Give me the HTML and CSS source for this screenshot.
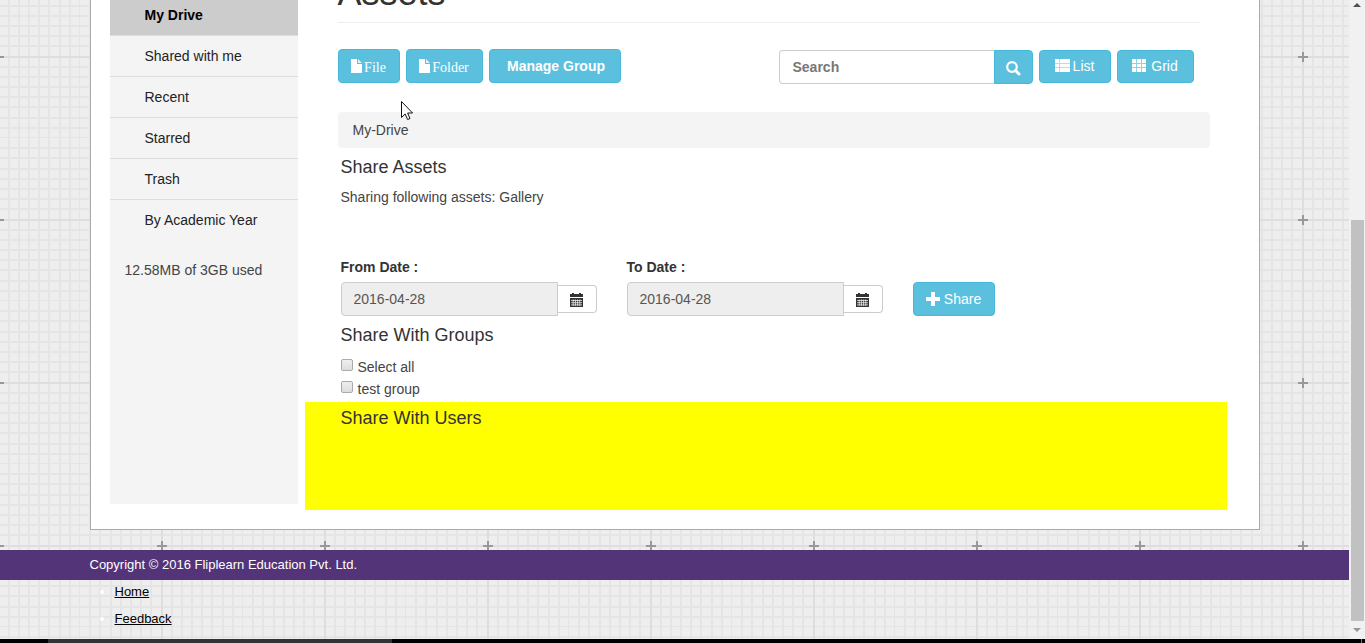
FILE: index.html
```html
<!DOCTYPE html>
<html lang="en">
<head>
<meta charset="utf-8">
<title>Assets</title>
<link rel="stylesheet" href="styles.css">
</head>
<body>
<div class="window">
  <div class="page">
    <div class="shell panel">
      <nav class="sidebar">
        <ul class="menu">
          <li><a class="menu-link active" href="#">My Drive</a></li>
          <li><a class="menu-link" href="#">Shared with me</a></li>
          <li><a class="menu-link" href="#">Recent</a></li>
          <li><a class="menu-link" href="#">Starred</a></li>
          <li><a class="menu-link" href="#">Trash</a></li>
          <li><a class="menu-link" href="#">By Academic Year</a></li>
        </ul>
        <p class="storage">12.58MB of 3GB used</p>
      </nav>
      <main class="main">
        <h1 class="title">Assets</h1>
        <div class="toolbar">
          <div class="tools">
            <button class="btn btn-serif btn-file" type="button"><svg class="doc" viewBox="0 0 11 14" aria-hidden="true"><path fill="#fff" d="M0 0h6v5h5v9H0z"/><path fill="#fff" opacity=".8" d="M7 0l4 4H7z"/></svg>File</button>
            <button class="btn btn-serif btn-folder" type="button"><svg class="doc" viewBox="0 0 11 14" aria-hidden="true"><path fill="#fff" d="M0 0h6v5h5v9H0z"/><path fill="#fff" opacity=".8" d="M7 0l4 4H7z"/></svg>Folder</button>
            <button class="btn btn-manage" type="button">Manage Group</button>
          </div>
          <div class="tools tools-right">
            <form class="search">
              <input class="search-input" type="text" placeholder="Search" aria-label="Search">
              <button class="btn search-btn" type="button" aria-label="Search"><svg width="15" height="15" viewBox="0 0 15 15" aria-hidden="true"><circle cx="6" cy="6" r="4.8" fill="none" stroke="#fff" stroke-width="2.2"/><path d="M9.5 9.5l3.500 3.500" stroke="#fff" stroke-width="3" stroke-linecap="round"/></svg></button>
            </form>
            <button class="btn btn-view btn-list" type="button"><svg width="15" height="13" viewBox="0 0 15 13" fill="#fff" aria-hidden="true"><path opacity=".5" d="M0 0h15v13H0z"/><path d="M0 0h4v4H0zM5 0h10v4H5zM0 5h4v3H0zM5 5h10v3H5zM0 9h4v4H0zM5 9h10v4H5z"/></svg>List</button>
            <button class="btn btn-view btn-grid" type="button"><svg width="14" height="13" viewBox="0 0 14 13" fill="#fff" aria-hidden="true"><path opacity=".3" d="M0 0h14v13H0z"/><path d="M0 0h4v4H0zM5 0h4v4H5zM10 0h4v4h-4zM0 5h4v3H0zM5 5h4v3H5zM10 5h4v3h-4zM0 9h4v4H0zM5 9h4v4H5zM10 9h4v4h-4z"/></svg>Grid</button>
          </div>
        </div>
        <div class="crumbs">My-Drive</div>
        <section class="section">
          <h4 class="heading">Share Assets</h4>
          <p class="sharing">Sharing following assets: Gallery</p>
          <div class="dates">
            <div class="date">
              <label class="date-label" for="from">From Date :</label>
              <div class="date-group">
                <input class="date-input" id="from" type="text" value="2016-04-28" readonly>
                <button class="date-btn" type="button" aria-label="Choose from date"><svg width="13" height="14" viewBox="0 0 13 14" aria-hidden="true"><path fill="#333" d="M0 1h2V0h2v1h5V0h2v1h2v3H0zM0 5h13v9H0z"/><path stroke="#fff" stroke-width=".7" d="M1 7.500h11M1 9.700h11M1 11.900h11M3.200 6.500V13M5.400 6.500V13M7.600 6.500V13M9.800 6.500V13"/></svg></button>
              </div>
            </div>
            <div class="date">
              <label class="date-label" for="to">To Date :</label>
              <div class="date-group">
                <input class="date-input" id="to" type="text" value="2016-04-28" readonly>
                <button class="date-btn" type="button" aria-label="Choose to date"><svg width="13" height="14" viewBox="0 0 13 14" aria-hidden="true"><path fill="#333" d="M0 1h2V0h2v1h5V0h2v1h2v3H0zM0 5h13v9H0z"/><path stroke="#fff" stroke-width=".7" d="M1 7.500h11M1 9.700h11M1 11.900h11M3.200 6.500V13M5.400 6.500V13M7.600 6.500V13M9.800 6.500V13"/></svg></button>
              </div>
            </div>
            <button class="btn btn-share" type="button"><svg width="14" height="14" viewBox="0 0 14 14" aria-hidden="true"><path fill="#fff" d="M5 0h4v5h5v4H9v5H5V9H0V5h5z"/></svg>Share</button>
          </div>
          <h4 class="heading">Share With Groups</h4>
          <div class="checks">
            <label class="check"><input class="box" type="checkbox">Select all</label>
            <label class="check"><input class="box" type="checkbox">test group</label>
          </div>
        </section>
        <section class="users">
          <h4 class="heading users-heading">Share With Users</h4>
        </section>
      </main>
    </div>
    <footer>
      <div class="copyright"><div class="shell">Copyright © 2016 Fliplearn Education Pvt. Ltd.</div></div>
      <ul class="shell links">
        <li><a href="#">Home</a></li>
        <li><a href="#">Feedback</a></li>
      </ul>
    </footer>
    <svg class="cursor" width="13" height="20" viewBox="0 0 13 20" aria-hidden="true"><path d="M.5.5v16l3.700-3.500 2.400 5.500 2.400-1-2.400-5.500h5z" fill="#fff" stroke="#111"/></svg>
  </div>
  <div class="scrollbar">
    <svg width="8" height="4" viewBox="0 0 8 4" aria-hidden="true"><path fill="#505050" d="M4 0l4 4H0z"/></svg>
    <div class="track"><div class="thumb"></div></div>
    <svg width="8" height="4" viewBox="0 0 8 4" aria-hidden="true"><path fill="#969696" d="M0 0h8L4 4z"/></svg>
  </div>
  <div class="taskbar"><div class="task"></div><div class="peek"></div></div>
</div>
</body>
</html>
```
FILE: styles.css
```css
* { box-sizing: border-box; }

body {
  margin: 0;
  font: 14px/20px "Liberation Sans", Arial, sans-serif;
  color: #333;
}

h1, h4, p, ul { margin: 0; padding: 0; font-weight: normal; }
svg { flex: none; display: block; }
button, input { font: inherit; margin: 0; }

.window {
  display: grid;
  grid-template-columns: 1fr 16px;
  grid-template-rows: 1fr 4px;
  height: 100vh;
  overflow: hidden;
}

.page {
  position: relative;
  overflow: hidden;
  background: #eee url("data:image/svg+xml,%3Csvg xmlns='http://www.w3.org/2000/svg' width='163' height='163'%3E%3Cg fill='none' stroke='%23e5e5e5' stroke-width='2'%3E%3Cpath d='M10 0v163M20 0v163M31 0v163M41 0v163M51 0v163M61 0v163M71 0v163M92 0v163M102 0v163M112 0v163M122 0v163M132 0v163M143 0v163M153 0v163M163 0v163'/%3E%3Cpath d='M0 10h163M0 20h163M0 31h163M0 41h163M0 51h163M0 61h163M0 71h163M0 92h163M0 102h163M0 112h163M0 122h163M0 132h163M0 143h163M0 153h163M0 163h163'/%3E%3Cpath stroke='%23dedede' d='M82 0v163M0 82h163'/%3E%3Cpath stroke='%23999' d='M82 77v10M77 82h10'/%3E%3C/g%3E%3C/svg%3E") 80px -25px;
}

.shell { max-width: 1170px; margin: 0 auto; }

.panel {
  display: flex;
  gap: 7px;
  margin-top: -38px;
  padding: 10px 32px 19px 19px;
  background: #fff;
  border: 1px solid #aaa;
}

.sidebar { width: 188px; margin-bottom: 6px; padding-top: 22px; background: #f4f4f4; }
.menu { list-style: none; }
.menu-link {
  display: block;
  padding: 10px 35px;
  border-bottom: 1px solid #ddd;
  color: #222;
  text-decoration: none;
}
.menu li:last-child .menu-link { border-bottom: 0; }
.menu-link.active { background: #ccc; color: #000; font-weight: bold; }
.storage { padding: 20px 15px; color: #444; }

.main { flex: 1; min-width: 0; }

.title {
  margin: 0 27px 26px 33px;
  padding-bottom: 9px;
  border-bottom: 1px solid #eee;
  font-size: 36px;
  line-height: 40px;
}

.toolbar { display: flex; justify-content: space-between; padding: 0 33px; }
.tools { display: flex; align-items: flex-start; gap: 6px; }
.tools-right { padding-top: 1px; }

.btn {
  display: flex;
  align-items: center;
  justify-content: center;
  gap: 4px;
  height: 34px;
  padding: 0;
  border: 1px solid #46b8da;
  border-radius: 4px;
  background: #5bc0de;
  color: #fff;
}
.btn-serif { gap: 2px; padding-top: 4px; font-family: "Liberation Serif", "Times New Roman", serif; }
.btn-file { width: 62px; }
.btn-folder { width: 77px; }
.doc { width: 11px; height: 14px; margin-bottom: 4px; }
.btn-manage { width: 132px; padding-left: 3px; font-weight: bold; }
.btn-view { height: 33px; padding-bottom: 2px; gap: 3px; }
.btn-list { width: 72px; }
.btn-grid { width: 77px; gap: 5px; }

.search { display: flex; height: 34px; }
.search-input {
  width: 215px;
  padding: 0 13px;
  border: 1px solid #ccc;
  border-right: 0;
  border-radius: 4px 0 0 4px;
  background: #fff;
}
.search-input::placeholder { color: #777; font-weight: bold; opacity: 1; }
.search-btn { width: 39px; padding-top: 2px; border-radius: 0 4px 4px 0; }

.crumbs {
  margin: 28px 17px 0 33px;
  padding: 8px 15px;
  border-radius: 4px;
  background: #f4f4f4;
  color: #444;
}

.section { padding: 0 36px 2px; }
.heading { padding-top: 9px; font-size: 18px; line-height: 20px; }
.sharing { margin: 10px 0 50px; color: #444; }

.dates { display: flex; align-items: flex-end; gap: 30px; }
.date-label { display: block; margin-bottom: 5px; font-weight: bold; }
.date-group { display: flex; align-items: center; }
.date-input {
  width: 217px;
  height: 34px;
  padding: 0 12px;
  border: 1px solid #ccc;
  border-radius: 4px 0 0 4px;
  background: #eee;
  color: #555;
}
.date-btn {
  display: flex;
  align-items: center;
  justify-content: center;
  width: 39px;
  height: 28px;
  padding: 2px 0 0;
  border: 1px solid #ccc;
  border-left: 0;
  border-radius: 0 4px 4px 0;
  background: #fff;
}
.btn-share { width: 82px; }

.checks { padding-top: 11px; }
.check { display: flex; gap: 5px; line-height: 22px; color: #444; }
.box {
  appearance: none;
  width: 12px;
  height: 12px;
  margin-top: 3px;
  border: 1px solid #aaa;
  border-radius: 2px;
  background: linear-gradient(#eee, #ddd);
}

.users { min-height: 108px; padding: 0 36px; background: #ff0; }
.users-heading { padding-top: 6px; }

.copyright { margin-top: 20px; padding: 5px 0; background: #533478; color: #fff; font-size: 13px; }
.links { padding: 2px 0 0 25px; color: #fff; font-size: 13px; }
.links li { padding-bottom: 7px; }
.links a { color: #000; }

.cursor { position: absolute; left: 401px; top: 101px; }

.scrollbar {
  display: flex;
  flex-direction: column;
  align-items: center;
  gap: 7px;
  padding: 3px 0 7px;
  background: #f1f1f1;
}
.track { flex: 1; width: 13px; padding-top: 206px; display: flex; }
.thumb { flex: 1; background: #c1c1c1; }

.taskbar { grid-column: 1 / -1; display: flex; justify-content: space-between; padding: 0 3px 0 48px; background: #000; }
.task { width: 344px; background: #333; }
.peek { width: 1px; background: #777; }
```
